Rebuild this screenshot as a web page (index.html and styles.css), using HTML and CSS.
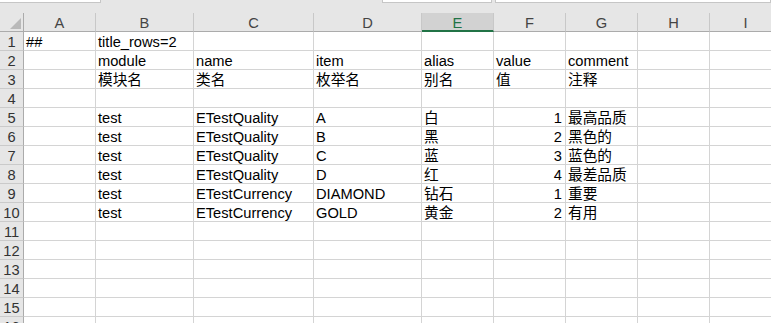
FILE: index.html
```html
<html>
<head>
    <link rel="stylesheet" href="styles.css">
</head>
<body>
    <div class="topbar">
        <div class="box box1"></div>
        <div class="box box2"></div>
        <div class="box box3"></div>
    </div>
    <div class="band"></div>
    <div class="sheet">
        <div class="row head">
            <div class="cell corner"><svg width="11" height="11" viewBox="0 0 11 11"><path d="M11 0V11H0Z" fill="#b9b9b9"/></svg></div>
            <div class="cell ch">A</div>
            <div class="cell ch">B</div>
            <div class="cell ch">C</div>
            <div class="cell ch">D</div>
            <div class="cell ch sel">E</div>
            <div class="cell ch">F</div>
            <div class="cell ch">G</div>
            <div class="cell ch">H</div>
            <div class="cell ch">I</div>
        </div>
        <div class="row">
            <div class="cell rh">1</div>
            <div class="cell">##</div>
            <div class="cell">title_rows=2</div>
            <div class="cell"></div><div class="cell"></div><div class="cell"></div><div class="cell"></div><div class="cell"></div><div class="cell"></div><div class="cell"></div>
        </div>
        <div class="row">
            <div class="cell rh">2</div>
            <div class="cell"></div>
            <div class="cell">module</div>
            <div class="cell">name</div>
            <div class="cell">item</div>
            <div class="cell">alias</div>
            <div class="cell">value</div>
            <div class="cell">comment</div>
            <div class="cell"></div><div class="cell"></div>
        </div>
        <div class="row">
            <div class="cell rh">3</div>
            <div class="cell"></div>
            <div class="cell">模块名</div>
            <div class="cell">类名</div>
            <div class="cell">枚举名</div>
            <div class="cell">别名</div>
            <div class="cell">值</div>
            <div class="cell">注释</div>
            <div class="cell"></div><div class="cell"></div>
        </div>
        <div class="row">
            <div class="cell rh">4</div>
            <div class="cell"></div><div class="cell"></div><div class="cell"></div><div class="cell"></div><div class="cell"></div><div class="cell"></div><div class="cell"></div><div class="cell"></div><div class="cell"></div>
        </div>
        <div class="row">
            <div class="cell rh">5</div>
            <div class="cell"></div>
            <div class="cell">test</div>
            <div class="cell">ETestQuality</div>
            <div class="cell">A</div>
            <div class="cell">白</div>
            <div class="cell num">1</div>
            <div class="cell">最高品质</div>
            <div class="cell"></div><div class="cell"></div>
        </div>
        <div class="row">
            <div class="cell rh">6</div>
            <div class="cell"></div>
            <div class="cell">test</div>
            <div class="cell">ETestQuality</div>
            <div class="cell">B</div>
            <div class="cell">黑</div>
            <div class="cell num">2</div>
            <div class="cell">黑色的</div>
            <div class="cell"></div><div class="cell"></div>
        </div>
        <div class="row">
            <div class="cell rh">7</div>
            <div class="cell"></div>
            <div class="cell">test</div>
            <div class="cell">ETestQuality</div>
            <div class="cell">C</div>
            <div class="cell">蓝</div>
            <div class="cell num">3</div>
            <div class="cell">蓝色的</div>
            <div class="cell"></div><div class="cell"></div>
        </div>
        <div class="row">
            <div class="cell rh">8</div>
            <div class="cell"></div>
            <div class="cell">test</div>
            <div class="cell">ETestQuality</div>
            <div class="cell">D</div>
            <div class="cell">红</div>
            <div class="cell num">4</div>
            <div class="cell">最差品质</div>
            <div class="cell"></div><div class="cell"></div>
        </div>
        <div class="row">
            <div class="cell rh">9</div>
            <div class="cell"></div>
            <div class="cell">test</div>
            <div class="cell">ETestCurrency</div>
            <div class="cell">DIAMOND</div>
            <div class="cell">钻石</div>
            <div class="cell num">1</div>
            <div class="cell">重要</div>
            <div class="cell"></div><div class="cell"></div>
        </div>
        <div class="row">
            <div class="cell rh">10</div>
            <div class="cell"></div>
            <div class="cell">test</div>
            <div class="cell">ETestCurrency</div>
            <div class="cell">GOLD</div>
            <div class="cell">黄金</div>
            <div class="cell num">2</div>
            <div class="cell">有用</div>
            <div class="cell"></div><div class="cell"></div>
        </div>
        <div class="row">
            <div class="cell rh">11</div>
            <div class="cell"></div><div class="cell"></div><div class="cell"></div><div class="cell"></div><div class="cell"></div><div class="cell"></div><div class="cell"></div><div class="cell"></div><div class="cell"></div>
        </div>
        <div class="row">
            <div class="cell rh">12</div>
            <div class="cell"></div><div class="cell"></div><div class="cell"></div><div class="cell"></div><div class="cell"></div><div class="cell"></div><div class="cell"></div><div class="cell"></div><div class="cell"></div>
        </div>
        <div class="row">
            <div class="cell rh">13</div>
            <div class="cell"></div><div class="cell"></div><div class="cell"></div><div class="cell"></div><div class="cell"></div><div class="cell"></div><div class="cell"></div><div class="cell"></div><div class="cell"></div>
        </div>
        <div class="row">
            <div class="cell rh">14</div>
            <div class="cell"></div><div class="cell"></div><div class="cell"></div><div class="cell"></div><div class="cell"></div><div class="cell"></div><div class="cell"></div><div class="cell"></div><div class="cell"></div>
        </div>
        <div class="row">
            <div class="cell rh">15</div>
            <div class="cell"></div><div class="cell"></div><div class="cell"></div><div class="cell"></div><div class="cell"></div><div class="cell"></div><div class="cell"></div><div class="cell"></div><div class="cell"></div>
        </div>
        <div class="row">
            <div class="cell rh">16</div>
            <div class="cell"></div><div class="cell"></div><div class="cell"></div><div class="cell"></div><div class="cell"></div><div class="cell"></div><div class="cell"></div><div class="cell"></div><div class="cell"></div>
        </div>
    </div>
</body>
</html>
```

FILE: styles.css
```css
html, body {
    margin: 0px;
    width: 100%;
    height: 100%;
    overflow: hidden;
    background: #ffffff;
}
body {
    font-family: "Liberation Sans", "Noto Sans CJK SC", sans-serif;
    font-size: 14.67px;
    color: #000000;
}
.topbar {
    display: flex;
    height: 3px;
    background: #e6e6e6;
}
.box {
    box-sizing: border-box;
    height: 3px;
    background: #ffffff;
    border: 1px solid #c6c6c6;
    border-top: none;
}
.box1 {
    width: 101px;
    border-left: none;
}
.box2 {
    width: 110px;
    margin-left: 281px;
}
.box3 {
    flex: 1;
    margin-left: 3px;
}
.band {
    height: 10px;
    background: #e6e6e6;
}
.sheet {
    width: 782px;
}
.row {
    display: grid;
    grid-template-columns: 24px 72px 98px 120px 108px repeat(5, 72px);
    height: 19px;
}
.cell {
    box-sizing: border-box;
    height: 19px;
    padding: 0 2px;
    border-right: 1px solid #d4d4d4;
    border-bottom: 1px solid #d4d4d4;
    line-height: 21px;
    white-space: nowrap;
}
.num {
    text-align: right;
    padding-right: 3px;
}
.rh {
    padding: 0;
    background: #e6e6e6;
    border-right-color: #ababab;
    border-bottom-color: #cacaca;
    text-align: center;
    color: #333333;
}
.head .cell {
    background: #e6e6e6;
    border-bottom-color: #ababab;
    line-height: 20px;
}
.ch {
    text-align: center;
    color: #444444;
    border-right-color: #c8c8c8;
}
.ch.sel {
    background: #d2d2d2;
    color: #217346;
    border-bottom: 2px solid #217346;
}
.corner {
    display: flex;
    align-items: flex-end;
    justify-content: flex-end;
    padding: 0 2px 2px 0;
    border-right-color: #ababab;
}
.corner svg {
    display: block;
}
```
